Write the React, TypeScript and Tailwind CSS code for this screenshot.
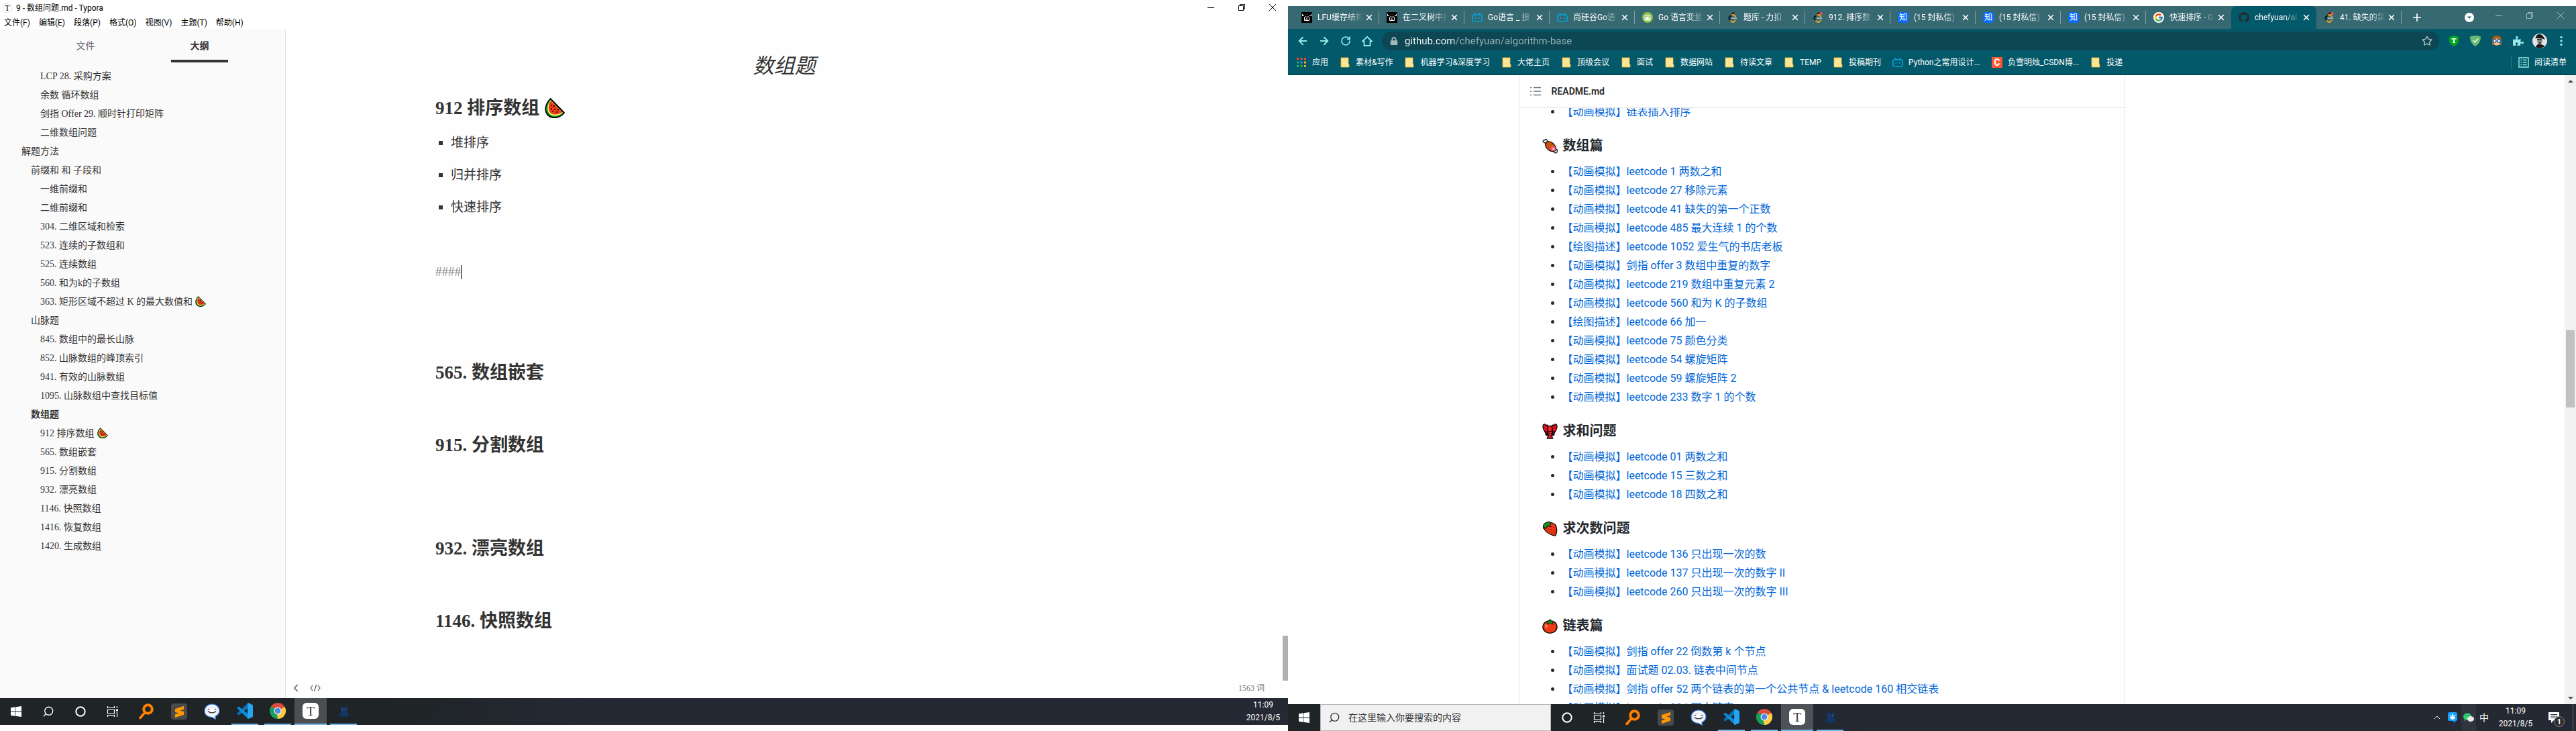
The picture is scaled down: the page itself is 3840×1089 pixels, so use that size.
import React from "react";
import { ArrowLeft, ArrowRight, RotateCw, Star, Plus, X, ChevronUp, ChevronLeft, Search } from "lucide-react";
import { FaGithub, FaLock, FaPuzzlePiece } from "react-icons/fa";
import { FcGoogle } from "react-icons/fc";
import { SiBilibili, SiSublimetext } from "react-icons/si";

type IconProps = { className?: string };

/* ---------- emoji drawings ---------- */

const Watermelon = ({ className }: IconProps) => (
  <svg viewBox="0 0 30 30" className={className} aria-hidden="true">
    <path d="M8.500 1C3 7 0 14 2 21c2 6 8 9 15 8 5-.7 9-3 12-7z" fill="#16a51c" stroke="#000" strokeWidth="1.800" strokeLinejoin="round" />
    <path d="M8.500 3C5 9 3 14 5 20c2 5 7 7 12 6.500 4-.5 7-2 10-4.500z" fill="#fff06a" />
    <path d="M8.500 4C6 9 5 14 6.500 19c2 4.500 6 6 10.500 5.500 4-.4 7-1.500 9.500-3.500z" fill="#f03a17" />
    <g fill="#000">
      <circle cx="10" cy="11" r="1" /><circle cx="14" cy="12" r="1" /><circle cx="10" cy="16" r="1" />
      <circle cx="15" cy="17" r="1" /><circle cx="12" cy="20" r="1" /><circle cx="18" cy="21" r="1" /><circle cx="20" cy="17.500" r="1" />
    </g>
  </svg>
);

const Meat = ({ className }: IconProps) => (
  <svg viewBox="0 0 24 24" className={className} aria-hidden="true">
    <path d="M2 6c-2-2 0-4 2-3 .5-2.500 4-1.500 3.500 1L9 6 5.500 9 4 6.800C3.500 7 2.500 7 2 6zM17 19l3-3 1.500 1.500c2-.5 3 1.500 1.500 3 .5 2-2 3.500-3.500 1.500-1.500.5-2.500-1-1.500-2z" fill="#fff" stroke="#000" strokeWidth="1.200" />
    <path d="M5 8c2-4 8-4 12 0 4 4 5 8 4 11-3 2-8 2-11.500-1C6 15 4 12 5 8z" fill="#c9520e" stroke="#000" strokeWidth="1.200" />
    <path d="M13 18c-1-4 2-7 6.500-5.500 1.500 2 1.800 4.500 1.300 6.300-2.300 1.200-5.500 1-7.800-.8z" fill="#f4586f" />
    <circle cx="17.500" cy="16.500" r="1.800" fill="#ffc8cf" />
  </svg>
);

const Lobster = ({ className }: IconProps) => (
  <svg viewBox="0 0 24 24" className={className} aria-hidden="true">
    <g fill="#e2121f" stroke="#000" strokeWidth="1.300" strokeLinejoin="round">
      <path d="M1 4c0-3 3-4 4-2l1 2 1-2c2 0 3 3 1 6l1 3 0 4H6C3 12 1 8 1 4zM23 4c0-3-3-4-4-2l-1 2-1-2c-2 0-3 3-1 6l-1 3v4h3c3-3 5-7 5-11z" />
      <path d="M4 13h5l-1 2H5.500zM5 16.500h4l-1 2H6.500zM20 13h-5l1 2h2.500zM19 16.500h-4l1 2h1.500z" />
      <path d="M9 5c1-2 5-2 6 0 1.500 4 1 9-.5 14l2 4h-9l2-4C8 14 7.500 9 9 5z" />
    </g>
    <path d="M9.500 12h5M9.500 15h5M10 18h4" stroke="#000" strokeWidth="1" />
    <path d="M11.500 5v6M12.500 13v6" stroke="#ff6a6f" strokeWidth="1" />
  </svg>
);

const Strawberry = ({ className }: IconProps) => (
  <svg viewBox="0 0 24 24" className={className} aria-hidden="true">
    <path d="M2 8C2 4 7 2 12 2.500c6 .5 10 4 10.500 10 .3 4-.5 8-2 10.500-5-.5-11-3-15-7C3 13 1.500 11 2 8z" fill="#f03a17" stroke="#000" strokeWidth="1.300" />
    <path d="M2 12C0 7 4 2 11 1l2 3-1 3 1 2-3-1-3 1-1 3-3-2z" fill="#1a8f22" stroke="#000" strokeWidth="1" />
    <g fill="#7c1508">
      <circle cx="14" cy="9" r=".9" /><circle cx="18" cy="10" r=".9" /><circle cx="10" cy="13" r=".9" /><circle cx="14" cy="14" r=".9" />
      <circle cx="18" cy="15" r=".9" /><circle cx="11" cy="17" r=".9" /><circle cx="15" cy="18.500" r=".9" /><circle cx="19" cy="19" r=".9" />
    </g>
  </svg>
);

const Tomato = ({ className }: IconProps) => (
  <svg viewBox="0 0 24 24" className={className} aria-hidden="true">
    <ellipse cx="12" cy="13.500" rx="11" ry="9.800" fill="#f03a17" stroke="#000" strokeWidth="1.400" />
    <ellipse cx="6.500" cy="12" rx="2" ry="3" fill="#ff8767" />
    <path d="M12 1l1 3 5 1-2 2 1 2.500-5-1.500-5 1.500L8 7 6 5l5-1z" fill="#1a8f22" stroke="#000" strokeWidth=".8" />
  </svg>
);

/* ---------- favicons ---------- */

const Nowcoder = () => (
  <svg viewBox="0 0 16 16" className="size-4" aria-hidden="true">
    <rect width="16" height="16" fill="#000" />
    <path d="M1.500 3v2.500H4M14.500 3v2.500H12M4.500 7.500v5h7v-5M5 7h2.500M8.500 7H11M8.500 8.500l-2 2.500h3" stroke="#fff" strokeWidth="1" fill="none" />
    <path d="M6 3.500h1v1H6zM9 3.500h1v1H9z" fill="#ff7846" />
  </svg>
);

const Bili = () => <SiBilibili className="size-4 text-[#00a1d6]" aria-hidden="true" />;

const GoSite = () => (
  <svg viewBox="0 0 16 16" className="size-4" aria-hidden="true">
    <circle cx="8" cy="8" r="8" fill="#8bc34a" />
    <rect x="3.500" y="4" width="9" height="8.500" rx="1" fill="#fff" />
    <path d="M3.500 6h9M6.500 7.500L5 9l1.500 1.500M9.500 7.500L11 9l-1.500 1.500" stroke="#5a8a26" strokeWidth=".9" fill="none" />
  </svg>
);

const Leet = ({ dot }: { dot?: boolean }) => (
  <svg viewBox="0 0 16 16" className="size-4" aria-hidden="true" fill="none" strokeLinecap="round" strokeWidth="1.900">
    <path d="M9.500 1L3 7.500" stroke="#111" />
    <path d="M3 7.500c-1 1-1 2 0 3L5 13" stroke="#111" />
    <path d="M5 13l1.500 1.300c1 .8 2.500.8 3.500 0l1.500-1.500M6.500 4.500c1.500-1 2.500-.8 3.500 0l2 2" stroke="#f5a623" />
    <path d="M7 9.300h6.500" stroke="#b3b1b0" />
    {dot && <circle cx="12.500" cy="2.300" r="2.200" fill="#e0524a" />}
  </svg>
);

const Zhihu = () => (
  <span className="flex size-4 items-center justify-center rounded-sm bg-[#0a6cff] text-[12px] leading-none text-white">知</span>
);

/* ---------- task bar icons ---------- */

const Windows = () => (
  <svg viewBox="0 0 16 16" className="size-4" fill="#fff" aria-hidden="true">
    <path d="M0 2.200l6.500-.9v6.300H0zM7.200 1.200L16 0v7.600H7.200zM0 8.400h6.500v6.300L0 13.800zM7.200 8.400H16V16l-8.800-1.200z" />
  </svg>
);

const Cortana = () => (
  <svg viewBox="0 0 16 16" className="size-4" aria-hidden="true">
    <circle cx="8" cy="8" r="6.700" fill="none" stroke="#fff" strokeWidth="2" />
  </svg>
);

const TaskView = () => (
  <svg viewBox="0 0 18 18" className="size-[18px]" fill="none" stroke="#fff" strokeWidth="1.200" aria-hidden="true">
    <path d="M1.500 1v2.500h10V1M1.500 17v-2.500h10V17M1.500 6h10v6h-10zM15.500 1v3M15.500 10v7" />
    <path d="M14 5.500h3v3h-3z" fill="#fff" stroke="none" />
  </svg>
);

const Everything = () => (
  <svg viewBox="0 0 24 24" className="size-6" fill="none" stroke="#ff8000" strokeLinecap="round" aria-hidden="true">
    <circle cx="14.500" cy="8.500" r="6.300" strokeWidth="4" />
    <path d="M9.500 14L3 21.500" strokeWidth="3.600" />
  </svg>
);

const Sublime = () => (
  <span className="flex size-6 items-center justify-center rounded-sm bg-[#4a4a4a]">
    <SiSublimetext className="size-[17px] text-[#ff9800]" aria-hidden="true" />
  </span>
);

const Chat = () => (
  <svg viewBox="0 0 24 24" className="size-6" aria-hidden="true">
    <path d="M12 1C5.500 1 1 5.500 1 11c0 6 5 9.500 11 9.500l5.500 3-.5-4.500c3.500-1.500 6-4.500 6-8C23 5.500 18.500 1 12 1z" fill="#f4f8ff" stroke="#3e7be0" strokeWidth="1.200" />
    <ellipse cx="12" cy="10.500" rx="8" ry="4.500" fill="#fff" stroke="#9aa7b8" strokeWidth=".6" />
    <path d="M6 8.500h2.500M15.500 8.500H18M6 11.500c3 3 9 3 12 0" stroke="#222" strokeWidth="1.200" fill="none" />
  </svg>
);

const VsCode = () => (
  <svg viewBox="0 0 24 24" className="size-6" aria-hidden="true">
    <path d="M17 0l-1 1L.8 15.500c-.4.400-.4 1 0 1.400l1.300 1.200c.4.300.8.300 1.200 0L17.500 7z" fill="#0a74b8" />
    <path d="M17 24l-1-1L.8 8.500c-.4-.4-.4-1 0-1.400l1.300-1.200c.4-.3.800-.3 1.200 0L17.500 17z" fill="#0d8ad8" />
    <path d="M17 0l6 2.700c.6.300 1 .8 1 1.500v15.600c0 .7-.4 1.200-1 1.500L17 24c-.6 0-.9-.3-.9-.8V.8c0-.5.3-.8.900-.8z" fill="#25a5f2" />
  </svg>
);

const Chrome = () => (
  <svg viewBox="0 0 24 24" className="size-6" aria-hidden="true">
    <path d="M12 12L1.600 6A12 12 0 0 1 22.400 6z" fill="#dd4b3e" />
    <path d="M12 12L22.400 6A12 12 0 0 1 12 24z" fill="#ffcd40" />
    <path d="M12 12v12A12 12 0 0 1 1.600 6z" fill="#1a9f5a" />
    <path d="M6.800 15L1.600 6 9 8z" fill="#1a9f5a" />
    <path d="M17.200 15L12 24l-1-7z" fill="#ffcd40" />
    <circle cx="12" cy="12" r="5.500" fill="#f3f3f3" />
    <circle cx="12" cy="12" r="4.300" fill="#4a88ee" />
  </svg>
);

const Typora = () => (
  <span className="flex size-6 items-center justify-center rounded-md bg-white font-['Liberation_Serif',serif] text-[19px] leading-none text-[#333]">T</span>
);

const Cat = () => (
  <svg viewBox="0 0 18 18" className="size-[18px]" aria-hidden="true">
    <path d="M5 1l3 2.500h4L15 1l.5 8 1.500 8.500H6c-4 0-5-3-4.500-6l1 .3c0 2 .5 3 2 3.200C5.500 13 5 11 5 8z" fill="#153564" />
    <path d="M7.500 6.500v1M12.500 6.500v1" stroke="#9fc0ec" strokeWidth="1" />
  </svg>
);

type App = { name: string; icon: React.ReactNode; state?: "open" | "active" };

const pinned: App[] = [
  { name: "Everything", icon: <Everything /> },
  { name: "Sublime Text", icon: <Sublime /> },
  { name: "TIM", icon: <Chat /> },
  { name: "Visual Studio Code", icon: <VsCode />, state: "open" },
  { name: "Chrome", icon: <Chrome />, state: "open" },
  { name: "Typora", icon: <Typora />, state: "active" },
  { name: "Cat", icon: <Cat />, state: "open" },
];

const TaskButton = ({ name, children }: { name: string; children: React.ReactNode }) => (
  <button aria-label={name} className="flex w-12 items-center justify-center">{children}</button>
);

const PinnedApps = () => (
  <div className="flex gap-px pl-0.5">
    {pinned.map((a) => (
      <button
        key={a.name}
        aria-label={a.name}
        className={
          a.state === "active"
            ? "flex h-10 w-12 flex-col items-center bg-white/20"
            : "flex h-10 w-12 flex-col items-center"
        }
      >
        <span className="flex flex-1 items-center">{a.icon}</span>
        {a.state && <span className={a.state === "active" ? "h-0.5 w-full bg-[#76b9ed]" : "h-0.5 w-10 bg-[#76b9ed]"} />}
      </button>
    ))}
  </div>
);

const Clock = ({ className }: IconProps) => (
  <div className={`flex flex-col items-center justify-center text-[12px] leading-[19px] text-white ${className ?? ""}`}>
    <time>11:09</time>
    <time>2021/8/5</time>
  </div>
);

/* ---------- Typora ---------- */

const outline: { t: string; l: 1 | 2 | 3; b?: boolean; melon?: boolean }[] = [
  { t: "LCP 28. 采购方案", l: 3 },
  { t: "余数 循环数组", l: 3 },
  { t: "剑指 Offer 29. 顺时针打印矩阵", l: 3 },
  { t: "二维数组问题", l: 3 },
  { t: "解题方法", l: 1 },
  { t: "前缀和 和 子段和", l: 2 },
  { t: "一维前缀和", l: 3 },
  { t: "二维前缀和", l: 3 },
  { t: "304. 二维区域和检索", l: 3 },
  { t: "523. 连续的子数组和", l: 3 },
  { t: "525. 连续数组", l: 3 },
  { t: "560. 和为k的子数组", l: 3 },
  { t: "363. 矩形区域不超过 K 的最大数值和", l: 3, melon: true },
  { t: "山脉题", l: 2 },
  { t: "845. 数组中的最长山脉", l: 3 },
  { t: "852. 山脉数组的峰顶索引", l: 3 },
  { t: "941. 有效的山脉数组", l: 3 },
  { t: "1095. 山脉数组中查找目标值", l: 3 },
  { t: "数组题", l: 2, b: true },
  { t: "912 排序数组", l: 3, melon: true },
  { t: "565. 数组嵌套", l: 3 },
  { t: "915. 分割数组", l: 3 },
  { t: "932. 漂亮数组", l: 3 },
  { t: "1146. 快照数组", l: 3 },
  { t: "1416. 恢复数组", l: 3 },
  { t: "1420. 生成数组", l: 3 },
];

const indent = { 1: "pl-8", 2: "pl-[46px]", 3: "pl-[60px]" };

const menus = ["文件(F)", "编辑(E)", "段落(P)", "格式(O)", "视图(V)", "主题(T)", "帮助(H)"];

const WindowButtons = ({ className }: IconProps) => (
  <div className={`flex ${className ?? ""}`}>
    <button aria-label="最小化" className="flex w-[46px] items-center justify-center">
      <svg viewBox="0 0 10 10" className="size-2.5" stroke="currentColor" fill="none"><path d="M0 5.500h10" /></svg>
    </button>
    <button aria-label="还原" className="flex w-[46px] items-center justify-center">
      <svg viewBox="0 0 10 10" className="size-2.5" stroke="currentColor" fill="none"><path d="M.5 2.500h7v7h-7zM2.500 2.500v-2h7v7h-2" /></svg>
    </button>
    <button aria-label="关闭" className="flex w-[46px] items-center justify-center">
      <svg viewBox="0 0 10 10" className="size-2.5" stroke="currentColor" fill="none"><path d="M0 0l10 10M10 0L0 10" /></svg>
    </button>
  </div>
);

const DocHeading = ({ children, className }: { children: React.ReactNode; className: string }) => (
  <h4 className={`flex items-center gap-2 text-[27px] leading-9 font-bold ${className}`}>{children}</h4>
);

const TyporaWindow = () => (
  <section className="flex min-h-0 flex-1 flex-col bg-white text-[#333]">
    <header className="shrink-0 text-black">
      <div className="flex h-6 items-stretch justify-between">
        <div className="flex items-center gap-1.5 pl-1 text-[12px]">
          <span className="flex size-3.5 items-center justify-center rounded-sm border border-gray-200 font-['Liberation_Serif',serif] text-[12px] leading-none">T</span>
          <span>9 - 数组问题.md - Typora</span>
        </div>
        <WindowButtons className="h-[21px]" />
      </div>
      <nav className="flex h-[19px] items-center gap-[13px] pl-1.5 text-[12px]">
        {menus.map((m) => <button key={m}>{m}</button>)}
      </nav>
    </header>
    <div className="flex min-h-0 flex-1 font-['Liberation_Serif','Noto_Sans_CJK_SC',serif]">
      <aside className="w-[426px] shrink-0 border-r border-[#e2e2e2] bg-[#fafafa]">
        <div className="grid h-[50px] grid-cols-5 text-[14px]">
          <button className="col-start-2 border-b-4 border-transparent pt-1 text-[#666]">文件</button>
          <button className="col-start-4 border-b-4 border-[#333] pt-1 font-bold">大纲</button>
        </div>
        <ul className="pt-1.5">
          {outline.map((o) => (
            <li key={o.t} className={indent[o.l]}>
              <a href="#outline" className={o.b ? "flex h-7 items-center gap-1 text-[14px] font-bold" : "flex h-7 items-center gap-1 text-[14px]"}>
                {o.t}
                {o.melon && <Watermelon className="size-4" />}
              </a>
            </li>
          ))}
        </ul>
      </aside>
      <div className="flex min-w-0 flex-1 flex-col bg-[#fefefe]">
        <div className="flex min-h-0 flex-1">
          <article className="flex-1 overflow-hidden pt-[30px]">
            <div className="mx-auto max-w-[1040px]">
              <h3 className="text-center font-['Noto_Sans_CJK_SC',sans-serif] text-[31px] leading-[46px] italic">数组题</h3>
              <DocHeading className="mt-6">912 排序数组 <Watermelon className="size-[30px]" /></DocHeading>
              <ul className="mt-5 flex flex-col gap-5 text-[19px] leading-7">
                {["堆排序", "归并排序", "快速排序"].map((s) => (
                  <li key={s} className="flex items-center gap-3 pl-[5px]">
                    <span className="size-1.5 bg-[#333]" />
                    {s}
                  </li>
                ))}
              </ul>
              <p className="mt-[68px] flex h-7 items-center text-[19px] text-[#888]">
                ####<span className="h-[21px] w-px bg-black" />
              </p>
              <DocHeading className="mt-[118px]">565. 数组嵌套</DocHeading>
              <DocHeading className="mt-[72px]">915. 分割数组</DocHeading>
              <DocHeading className="mt-[118px]">932. 漂亮数组</DocHeading>
              <DocHeading className="mt-[72px]">1146. 快照数组</DocHeading>
            </div>
          </article>
          <div className="flex w-2 flex-col justify-end"><div className="h-[67px] bg-[#b0b0b0]" /></div>
        </div>
        <footer className="flex h-[26px] shrink-0 items-center justify-between pr-[35px] pb-1 pl-1.5 text-[12px] text-[#777]">
          <div className="flex items-center gap-3 text-[#555]">
            <button aria-label="侧边栏"><ChevronLeft className="size-[18px]" strokeWidth={2} /></button>
            <button className="flex" aria-label="源代码模式">
              <svg viewBox="0 0 16 12" className="h-3 w-4" fill="none" stroke="currentColor" strokeWidth="1.200"><path d="M4 2L1 6l3 4M12 2l3 4-3 4M9.500 1l-3 10" /></svg>
            </button>
          </div>
          <span>1563 词</span>
        </footer>
      </div>
    </div>
  </section>
);

/* ---------- Chrome ---------- */

const tabs: { t: string; icon: React.ReactNode; active?: boolean }[] = [
  { t: "LFU缓存结构", icon: <Nowcoder /> },
  { t: "在二叉树中找", icon: <Nowcoder /> },
  { t: "Go语言 _ 搜", icon: <Bili /> },
  { t: "尚硅谷Go语", icon: <Bili /> },
  { t: "Go 语言变量", icon: <GoSite /> },
  { t: "题库 - 力扣", icon: <Leet /> },
  { t: "912. 排序数", icon: <Leet dot /> },
  { t: "(15 封私信)", icon: <Zhihu /> },
  { t: "(15 封私信)", icon: <Zhihu /> },
  { t: "(15 封私信)", icon: <Zhihu /> },
  { t: "快速排序 - G", icon: <FcGoogle className="size-4 rounded-full bg-white p-px" /> },
  { t: "chefyuan/al", icon: <FaGithub className="size-4 text-[#24292e]" />, active: true },
  { t: "41. 缺失的第", icon: <Leet dot /> },
];

const FolderIcon = () => (
  <svg viewBox="0 0 16 16" className="size-4" aria-hidden="true">
    <path d="M2 1h11v10h1v4H2z" fill="#ffe694" />
    <path d="M2 1h11v10h1v4H2z" fill="none" stroke="#e9b93c" strokeWidth=".8" />
  </svg>
);

const AppsIcon = () => (
  <svg viewBox="0 0 16 16" className="size-4" aria-hidden="true">
    <path d="M1 1h3v3H1zM6.500 1h3v3h-3zM12 1h3v3h-3z" fill="#f44336" />
    <path d="M1 6.500h3v3H1z" fill="#34a853" /><path d="M6.500 6.500h3v3h-3z" fill="#4285f4" /><path d="M12 6.500h3v3h-3z" fill="#fbab09" />
    <path d="M1 12h3v3H1zM6.500 12h3v3h-3z" fill="#34a853" /><path d="M12 12h3v3h-3z" fill="#fbab09" />
  </svg>
);

const Csdn = () => <span className="flex size-4 items-center justify-center bg-[#fc5531] text-[14px] leading-none font-bold text-white">C</span>;

const bookmarks: { t: string; icon?: React.ReactNode }[] = [
  { t: "应用", icon: <AppsIcon /> },
  { t: "素材&写作" },
  { t: "机器学习&深度学习" },
  { t: "大佬主页" },
  { t: "顶级会议" },
  { t: "面试" },
  { t: "数据网站" },
  { t: "待读文章" },
  { t: "TEMP" },
  { t: "投稿期刊" },
  { t: "Python之常用设计...", icon: <Bili /> },
  { t: "负雪明烛_CSDN博...", icon: <Csdn /> },
  { t: "投递" },
];

const ToolButton = ({ name, children }: { name: string; children: React.ReactNode }) => (
  <button aria-label={name} className="flex w-8 items-center justify-center">{children}</button>
);

const TabStrip = () => (
  <div className="flex h-[34px] shrink-0 bg-[#376972] pl-[9px] text-[12px] text-white">
    {tabs.map((t, i) => (
      <div key={i} className={t.active ? "flex w-[127px] items-center rounded-t-lg bg-[#03596a] pl-[11px]" : "flex w-[127px] items-center pl-[11px]"}>
        {t.icon}
        <button className="ml-2 w-[68px] overflow-hidden text-left leading-6 whitespace-nowrap [mask-image:linear-gradient(90deg,#000_65%,transparent)]">{t.t}</button>
        <button aria-label="关闭标签页" className="ml-0.5"><X className="size-3.5" strokeWidth={2.500} /></button>
        <span className={t.active || i === 10 ? "ml-auto" : "ml-auto h-5 w-px bg-[#7fa0a6]"} />
      </div>
    ))}
    <button aria-label="新标签页" className="flex w-[46px] items-center justify-center"><Plus className="size-[18px]" strokeWidth={2.300} /></button>
    <button aria-label="搜索标签页" className="mr-[14px] ml-auto flex items-center">
      <svg viewBox="0 0 14 14" className="size-3.5"><circle cx="7" cy="7" r="7" fill="#fff" /><path d="M4 5.500h6L7 9z" fill="#376972" /></svg>
    </button>
    <WindowButtons className="h-7 text-[#9ab6bb]" />
  </div>
);

const Toolbar = () => (
  <div className="flex h-9 shrink-0 items-center bg-[#03596a] pr-1.5 pl-1.5 text-[#9be8e8]">
    <ToolButton name="后退"><ArrowLeft className="size-[18px]" strokeWidth={2.500} /></ToolButton>
    <ToolButton name="前进"><ArrowRight className="size-[18px]" strokeWidth={2.500} /></ToolButton>
    <ToolButton name="重新加载"><RotateCw className="size-4" strokeWidth={2.500} /></ToolButton>
    <ToolButton name="主页">
      <svg viewBox="0 0 16 16" className="size-4" fill="none" stroke="currentColor" strokeWidth="1.800"><path d="M1 8.500L8 1.800l7 6.700h-2.500V15h-9V8.500z" /></svg>
    </ToolButton>
    <div className="ml-1.5 flex h-7 flex-1 items-center rounded-full bg-[#0d4753] pr-2.5 pl-3">
      <FaLock className="size-3 text-[#a5b8bc]" aria-hidden="true" />
      <input
        aria-label="地址"
        defaultValue="github.com/chefyuan/algorithm-base"
        className="ml-2.5 h-6 flex-1 bg-[linear-gradient(90deg,#fff_74px,#9cb3b8_74px)] bg-clip-text text-[15px] text-transparent outline-none"
      />
      <button aria-label="收藏"><Star className="size-4 text-[#b5c6c9]" /></button>
    </div>
    <div className="ml-1.5 flex h-7">
      <ToolButton name="扩展 T">
        <svg viewBox="0 0 16 16" className="size-4"><path d="M8 0l7 2v5c0 4-3 7-7 9-4-2-7-5-7-9V2z" fill="#00a81c" /><path d="M4.500 4h7v2h-1V5.200H9V10h1v1H6v-1h1V5.200H5.500V6h-1z" fill="#fff" /></svg>
      </ToolButton>
      <ToolButton name="AdGuard">
        <svg viewBox="0 0 16 16" className="size-4"><path d="M8 0c3 0 5 .8 8 1.500 0 6-2 11-8 14.500C2 12.500 0 7.500 0 1.500 3 .8 5 0 8 0z" fill="#68bc71" /><path d="M4.500 7l3 3L12 4.500" stroke="#fff" strokeWidth="1.300" fill="none" /></svg>
      </ToolButton>
      <ToolButton name="助手">
        <svg viewBox="0 0 16 16" className="size-4"><path d="M1 14V6c0-8 14-8 14 0v8z" fill="#a35a12" /><circle cx="8" cy="9" r="5.500" fill="#f3c59b" /><path d="M2.500 6C4 1 12 1 13.500 6 10 4 6 4 2.500 6z" fill="#b86a1c" /><g fill="#fff" stroke="#1565c0" strokeWidth="1.400"><circle cx="4.800" cy="8" r="2.300" /><circle cx="11.200" cy="8" r="2.300" /></g></svg>
      </ToolButton>
      <ToolButton name="扩展程序"><FaPuzzlePiece className="size-4" /></ToolButton>
      <ToolButton name="用户">
        <svg viewBox="0 0 22 22" className="size-[22px]"><circle cx="11" cy="11" r="11" fill="#e4e4e6" /><path d="M4 7l3-5c3-2 7-1 9 2l3 5c-4-2-10-2-15-2zM5 20c1-4 4-5 7-4s5 1 6 3c-4 3-9 4-13 1z" fill="#161616" /><path d="M7 8c3-1 6 0 8 1 0 4-1 7-4 7S7 12 7 8z" fill="#8d8d8d" /><path d="M7 9h7M9 14h4" stroke="#222" strokeWidth="1.300" /></svg>
      </ToolButton>
      <ToolButton name="菜单">
        <svg viewBox="0 0 4 16" className="h-4 w-1" fill="currentColor"><circle cx="2" cy="2.500" r="1.700" /><circle cx="2" cy="8" r="1.700" /><circle cx="2" cy="13.500" r="1.700" /></svg>
      </ToolButton>
    </div>
  </div>
);

const BookmarkBar = () => (
  <div className="flex h-[33px] shrink-0 items-center justify-between border-b border-[#04404c] bg-[#03596a] pr-3.5 pb-1 pl-3 text-[12px] text-white">
    <nav className="flex items-center gap-[17px]">
      {bookmarks.map((b) => (
        <a key={b.t} href="#bookmark" className="flex items-center gap-2 whitespace-nowrap">{b.icon ?? <FolderIcon />}{b.t}</a>
      ))}
    </nav>
    <button className="flex items-center gap-2 border-l border-[#2b7584] pl-2.5">
      <svg viewBox="0 0 16 16" className="size-4" fill="none" stroke="#9be8e8" strokeWidth="1.400"><path d="M1 1h14v14H1zM3.500 4.500h2M3.500 8h2M3.500 11.500h2M7 4.500h5.500M7 8h5.500M7 11.500h5.500" /></svg>
      阅读清单
    </button>
  </div>
);

const sections: { h?: string; icon?: React.ReactNode; items: string[] }[] = [
  { items: ["【动画模拟】链表插入排序"] },
  {
    h: "数组篇",
    icon: <Meat className="size-[23px]" />,
    items: [
      "【动画模拟】leetcode 1 两数之和",
      "【动画模拟】leetcode 27 移除元素",
      "【动画模拟】leetcode 41 缺失的第一个正数",
      "【动画模拟】leetcode 485 最大连续 1 的个数",
      "【绘图描述】leetcode 1052 爱生气的书店老板",
      "【动画模拟】剑指 offer 3 数组中重复的数字",
      "【动画模拟】leetcode 219 数组中重复元素 2",
      "【动画模拟】leetcode 560 和为 K 的子数组",
      "【绘图描述】leetcode 66 加一",
      "【动画模拟】leetcode 75 颜色分类",
      "【动画模拟】leetcode 54 螺旋矩阵",
      "【动画模拟】leetcode 59 螺旋矩阵 2",
      "【动画模拟】leetcode 233 数字 1 的个数",
    ],
  },
  {
    h: "求和问题",
    icon: <Lobster className="size-[23px]" />,
    items: ["【动画模拟】leetcode 01 两数之和", "【动画模拟】leetcode 15 三数之和", "【动画模拟】leetcode 18 四数之和"],
  },
  {
    h: "求次数问题",
    icon: <Strawberry className="size-[23px]" />,
    items: ["【动画模拟】leetcode 136 只出现一次的数", "【动画模拟】leetcode 137 只出现一次的数字 II", "【动画模拟】leetcode 260 只出现一次的数字 III"],
  },
  {
    h: "链表篇",
    icon: <Tomato className="size-[23px]" />,
    items: [
      "【动画模拟】剑指 offer 22 倒数第 k 个节点",
      "【动画模拟】面试题 02.03. 链表中间节点",
      "【动画模拟】剑指 offer 52 两个链表的第一个公共节点 & leetcode 160 相交链表",
      "【动画模拟】leetcode 234 回文链表",
    ],
  },
];

const Readme = () => (
  <main className="flex w-[904px] flex-col overflow-hidden border-x border-[#e1e4e8] text-[#24292e]">
    <div className="z-10 flex h-[49px] shrink-0 items-center gap-4 border-b border-[#e1e4e8] bg-white pl-4">
      <button aria-label="目录">
        <svg viewBox="0 0 16 14" className="h-3.5 w-4 text-[#6a737d]" stroke="currentColor" strokeWidth="1.500"><path d="M0 1.500h2M0 7h2M0 12.500h2M5 1.500h11M5 7h11M5 12.500h11" /></svg>
      </button>
      <h2 className="text-[14px] font-semibold">README.md</h2>
    </div>
    <div className="-mt-1.5 min-h-0 flex-1 px-8">
      {sections.map((s, i) => (
        <section key={i}>
          {s.h && (
            <h3 className="mt-[26px] mb-3.5 flex h-[25px] items-center gap-2 pl-0.5 text-[20px] leading-[25px] font-semibold">
              {s.icon}{s.h}
            </h3>
          )}
          <ul className="flex list-disc flex-col gap-1 pl-8 text-[16px] leading-6">
            {s.items.map((it) => (
              <li key={it}><a href="#article" className="text-[#0366d6]">{it}</a></li>
            ))}
          </ul>
        </section>
      ))}
    </div>
  </main>
);

const ChromeWindow = () => (
  <section className="flex min-h-0 flex-1 flex-col">
    <TabStrip />
    <Toolbar />
    <BookmarkBar />
    <div className="flex min-h-0 flex-1 bg-white">
      <div className="flex min-w-0 flex-1">
        <div className="mx-auto flex w-full max-w-[1216px]"><Readme /></div>
      </div>
      <div className="flex w-[17px] flex-col items-center bg-[#f1f1f1] py-1.5">
        <svg viewBox="0 0 8 5" className="h-[5px] w-2"><path d="M0 5l4-4 4 4z" fill="#505050" /></svg>
        <div className="grow-[369]" />
        <div className="h-[115px] w-[13px] bg-[#c1c1c1]" />
        <div className="grow-[431]" />
        <svg viewBox="0 0 8 5" className="h-[5px] w-2"><path d="M0 0l4 4 4-4z" fill="#505050" /></svg>
      </div>
    </div>
  </section>
);

const TrayIcons = () => (
  <div className="flex items-center text-white">
    <button aria-label="显示隐藏的图标" className="flex w-6 justify-center"><ChevronUp className="size-4" strokeWidth={1.500} /></button>
    <button aria-label="通知" className="flex w-6 justify-center">
      <svg viewBox="0 0 16 16" className="size-4"><path d="M2.500 0h9A2.500 2.500 0 0 1 14 2.500v8a2.500 2.500 0 0 1-2.500 2.500H11v3l-4-3H2.500A2.500 2.500 0 0 1 0 10.500v-8A2.500 2.500 0 0 1 2.500 0z" fill="#12a0ff" /><path d="M7 2v9M3 5l8 3M11 5L3 8M7 6.500L4.500 10.500M7 6.500l2.500 4" stroke="#fff" strokeWidth="1.500" /></svg>
    </button>
    <button aria-label="微信" className="flex h-10 w-[22px] items-center justify-center bg-white/5">
      <svg viewBox="0 0 16 14" className="h-3.5 w-4"><ellipse cx="6" cy="5.500" rx="6" ry="5" fill="#2ed573" /><path d="M2 9l-.5 3L5 10z" fill="#2ed573" /><ellipse cx="11" cy="9" rx="5" ry="4" fill="#e9e9e9" /><g fill="#1b5e38"><circle cx="4" cy="4" r=".8" /><circle cx="8" cy="4" r=".8" /></g></svg>
    </button>
    <button className="w-6 text-center text-[14px]">中</button>
    <Clock className="w-[70px]" />
    <button aria-label="操作中心" className="relative flex w-11 justify-center">
      <svg viewBox="0 0 16 16" className="size-4"><path d="M0 0h16v12h-8l-4 4v-4H0z" fill="#fff" /><path d="M3 3.500h10M3 6h10M3 8.500h10" stroke="#242733" /></svg>
      <span className="absolute top-1.5 left-[22px] flex size-4 items-center justify-center rounded-full border border-[#888] bg-[#2d2d30] text-[11px] leading-none font-bold">1</span>
    </button>
    <span className="ml-1.5 h-10 w-[5px] border-l border-[#6b6d76]" />
  </div>
);

const bar = "flex h-10 shrink-0 bg-[linear-gradient(90deg,#1f2426_0%,#1f2426_30%,#252934_46%,#252934_100%)]";

export default function Desktop() {
  return (
    <div className="flex h-screen w-full bg-white font-[Roboto,'Noto_Sans_CJK_SC',sans-serif]">
      <div className="flex min-w-0 flex-1 flex-col pb-[9px]">
        <TyporaWindow />
        <footer className={bar}>
          <TaskButton name="开始"><Windows /></TaskButton>
          <TaskButton name="搜索"><Search className="size-[18px] -scale-x-100 text-white" strokeWidth={1.700} /></TaskButton>
          <TaskButton name="Cortana"><Cortana /></TaskButton>
          <TaskButton name="任务视图"><TaskView /></TaskButton>
          <PinnedApps />
          <Clock className="ml-auto w-[74px]" />
        </footer>
      </div>
      <div className="flex min-w-0 flex-1 flex-col pt-[9px]">
        <ChromeWindow />
        <footer className={bar}>
          <TaskButton name="开始"><Windows /></TaskButton>
          <label className="flex w-[344px] items-center gap-3 border border-[#b9b9b9] bg-[#f1f1f1] pl-[11px]">
            <Search className="size-[18px] -scale-x-100 text-[#222]" strokeWidth={1.500} />
            <input aria-label="搜索" placeholder="在这里输入你要搜索的内容" className="flex-1 bg-transparent text-[14px] outline-none placeholder:text-[#333]" />
          </label>
          <TaskButton name="Cortana"><Cortana /></TaskButton>
          <TaskButton name="任务视图"><TaskView /></TaskButton>
          <PinnedApps />
          <div className="ml-auto"><TrayIcons /></div>
        </footer>
      </div>
    </div>
  );
}
